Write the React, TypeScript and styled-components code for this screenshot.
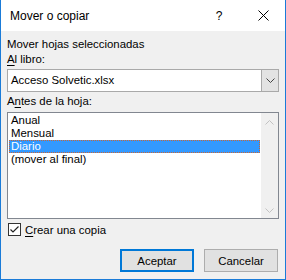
import styled, { createGlobalStyle } from "styled-components";

const Global = createGlobalStyle`
  html, body {
    margin: 0;
    padding: 0;
    background: #ffffff;
  }
  body {
    font-family: "Liberation Sans", Arial, sans-serif;
    font-size: 11.4px;
    color: #000000;
  }
`;

const Window = styled.div`
  width: 286px;
  height: 280px;
  box-sizing: border-box;
  border: 1px solid #1a7bd8;
  border-top: none;
  display: flex;
  flex-direction: column;
  background: #f0f0f0;
  overflow: hidden;
`;

const TitleBar = styled.div`
  height: 31px;
  flex: none;
  background: #ffffff;
  display: flex;
  align-items: center;
  padding-left: 9px;
  box-sizing: border-box;
`;

const Title = styled.div`
  flex: 1;
  font-size: 12px;
`;

const HelpBtn = styled.div`
  width: 20px;
  text-align: center;
  font-size: 12px;
  margin-right: 12px;
`;

const CloseBtn = styled.div`
  width: 44px;
  height: 30px;
  display: flex;
  align-items: center;
  justify-content: center;
`;

const Body = styled.div`
  flex: 1;
  display: flex;
  flex-direction: column;
  padding: 6px 6px 0 6px;
`;

const Label = styled.div<{ $gap?: number }>`
  line-height: 15px;
  margin-top: ${(p) => p.$gap ?? 0}px;
`;

const Key = styled.span`
  text-decoration: underline;
  text-underline-offset: 2px;
`;

const Combo = styled.div`
  height: 23px;
  box-sizing: border-box;
  border: 1px solid #a9a9a9;
  background: #ffffff;
  display: flex;
  margin-top: 2px;
`;

const ComboText = styled.div`
  flex: 1;
  line-height: 21px;
  padding-left: 3px;
`;

const ComboArrow = styled.div`
  width: 16px;
  background: #e3e3e3;
  border-left: 1px solid #a9a9a9;
  display: flex;
  align-items: center;
  justify-content: center;
`;

const ListBox = styled.div`
  height: 107px;
  box-sizing: border-box;
  border: 1px solid #828790;
  background: #ffffff;
  display: flex;
  margin-top: 3px;
`;

const Items = styled.div`
  flex: 1;
  padding: 1px 1px 0 1px;
`;

const Item = styled.div<{ $selected?: boolean }>`
  height: 13px;
  line-height: 13px;
  padding-left: 2px;
  box-sizing: border-box;
  white-space: nowrap;
  background: ${(p) => (p.$selected ? "#3399ff" : "transparent")};
  color: ${(p) => (p.$selected ? "#ffffff" : "#000000")};
  outline: ${(p) => (p.$selected ? "1px dotted #cc6633" : "none")};
  outline-offset: -1px;
`;

const ScrollBar = styled.div`
  width: 17px;
  background: #f0f0f0;
  display: flex;
  flex-direction: column;
  justify-content: space-between;
  align-items: center;
  padding: 7px 0 5px;
  box-sizing: border-box;
`;

const CheckRow = styled.div`
  display: flex;
  align-items: center;
  height: 13px;
  margin-top: 4px;
  gap: 4px;
  padding-left: 1px;
`;

const CheckBox = styled.div`
  width: 13px;
  height: 13px;
  box-sizing: border-box;
  border: 1px solid #333333;
  background: #ffffff;
  display: flex;
  align-items: center;
  justify-content: center;
`;

const Buttons = styled.div`
  display: flex;
  justify-content: flex-end;
  gap: 10px;
  margin-top: 13px;
  padding-right: 1px;
`;

const Button = styled.div<{ $primary?: boolean }>`
  width: 74px;
  height: 23px;
  box-sizing: border-box;
  background: #e1e1e1;
  border: ${(p) => (p.$primary ? "2px solid #0078d7" : "1px solid #adadad")};
  display: flex;
  align-items: center;
  justify-content: center;
`;

const Chevron = ({ color, up }: { color: string; up?: boolean }) => (
  <svg width="9" height="5" viewBox="0 0 9 5">
    <path
      d={up ? "M0.5 4.5 L4.5 0.5 L8.5 4.5" : "M0.5 0.5 L4.5 4.5 L8.5 0.5"}
      fill="none"
      stroke={color}
      strokeWidth="1"
    />
  </svg>
);

export default function App() {
  return (
    <>
      <Global />
      <Window>
        <TitleBar>
          <Title>Mover o copiar</Title>
          <HelpBtn>?</HelpBtn>
          <CloseBtn>
            <svg width="11" height="11" viewBox="0 0 11 11">
              <path d="M0.5 0.5 L10.5 10.5 M10.5 0.5 L0.5 10.5" stroke="#000" strokeWidth="1" />
            </svg>
          </CloseBtn>
        </TitleBar>
        <Body>
          <Label>Mover hojas seleccionadas</Label>
          <Label>
            <Key>A</Key>l libro:
          </Label>
          <Combo>
            <ComboText>Acceso Solvetic.xlsx</ComboText>
            <ComboArrow>
              <Chevron color="#444444" />
            </ComboArrow>
          </Combo>
          <Label $gap={2}>
            A<Key>n</Key>tes de la hoja:
          </Label>
          <ListBox>
            <Items>
              <Item>Anual</Item>
              <Item>Mensual</Item>
              <Item $selected>Diario</Item>
              <Item>(mover al final)</Item>
            </Items>
            <ScrollBar>
              <Chevron color="#c2c2c2" up />
              <Chevron color="#c2c2c2" />
            </ScrollBar>
          </ListBox>
          <CheckRow>
            <CheckBox>
              <svg width="11" height="11" viewBox="0 0 11 11">
                <path d="M1.5 5.5 L4 8 L9.5 2.5" fill="none" stroke="#222" strokeWidth="1.2" />
              </svg>
            </CheckBox>
            <span>
              <Key>C</Key>rear una copia
            </span>
          </CheckRow>
          <Buttons>
            <Button $primary>Aceptar</Button>
            <Button>Cancelar</Button>
          </Buttons>
        </Body>
      </Window>
    </>
  );
}
